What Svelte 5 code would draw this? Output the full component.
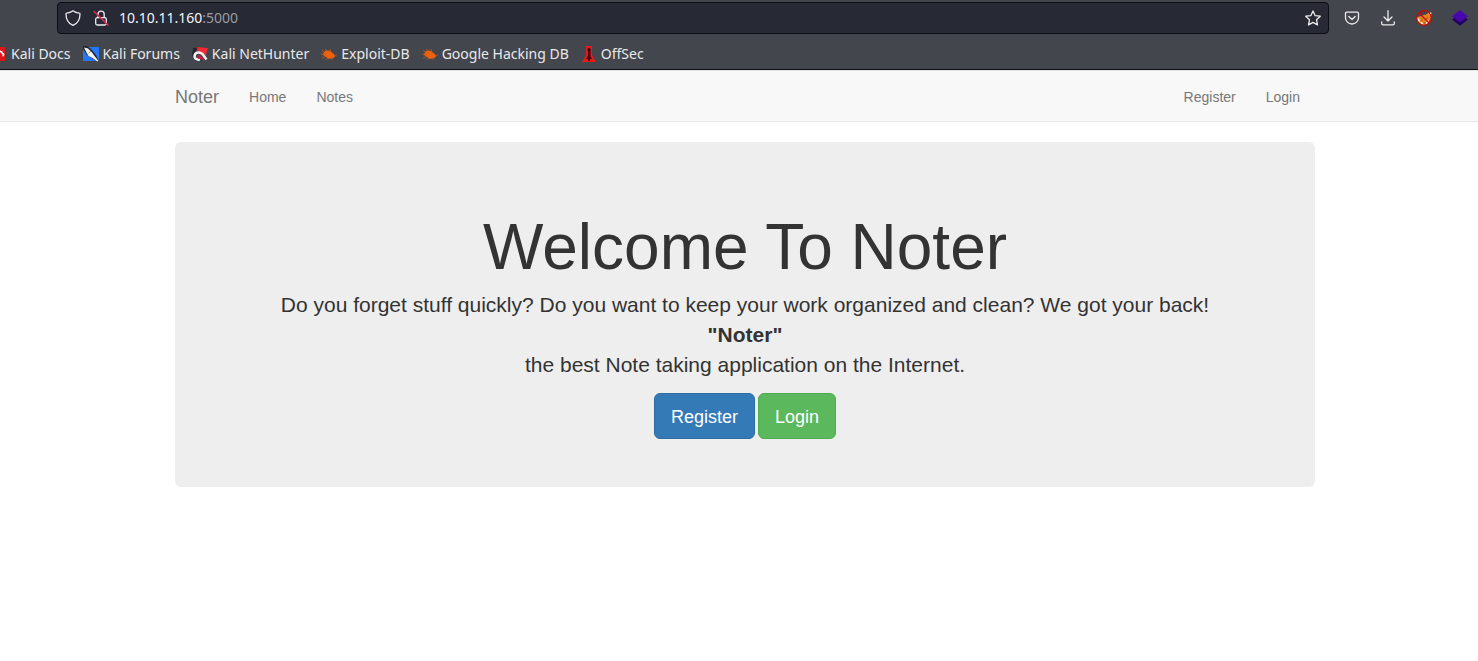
<script>
  const bookmarks = [
    { label: 'Kali Docs', icon: 'docs' },
    { label: 'Kali Forums', icon: 'forums' },
    { label: 'Kali NetHunter', icon: 'nethunter' },
    { label: 'Exploit-DB', icon: 'bug' },
    { label: 'Google Hacking DB', icon: 'bug' },
    { label: 'OffSec', icon: 'offsec' }
  ];
</script>

<div class="browser">
  <div class="toolbar">
    <div class="address">
      <button class="tool shield" aria-label="Tracking protection">
        <svg viewBox="0 0 16 16"><path d="M8 .8C6.2 2.2 4 3 1.7 3.2c-.5 0-.7.4-.7.8 0 5 1.700 9.200 7 11.400 5.300-2.200 7-6.400 7-11.400 0-.4-.2-.8-.7-.8C12 3 9.800 2.200 8 .8z" /></svg>
      </button>
      <button class="tool lock" aria-label="Connection is not secure">
        <svg viewBox="0 0 16 16"><rect x="2.700" y="7.700" width="10.600" height="7.300" rx="1.500" /><path d="M5 7.500V4.300a3.100 3.100 0 0 1 6.200 0v3.200" /><path class="slash" d="M1 1.500 15 15" /></svg>
      </button>
      <div class="url"><span>10.10.11.160</span>:5000</div>
      <button class="tool" aria-label="Bookmark this page">
        <svg viewBox="0 0 16 16"><path d="m8 .9 2.100 4.700 5.200.6-3.800 3.500 1 5.200L8 12.400l-4.500 2.500 1-5.200L.7 6.200l5.200-.6z" /></svg>
      </button>
    </div>
    <div class="actions">
      <button class="tool" aria-label="Save to Pocket">
        <svg viewBox="0 0 16 16"><path d="M2.800 2.200h10.400c.8 0 1.300.5 1.300 1.300v4.200a6.500 6.300 0 0 1-13 0V3.500c0-.8.5-1.300 1.300-1.300z" /><path d="M4.800 6.500 8 9.500l3.200-3" /></svg>
      </button>
      <button class="tool" aria-label="Downloads">
        <svg viewBox="0 0 16 16"><path d="M8 .7v10.200M4 7l4 4 4-4M1.700 11.800v1.700c0 .8.500 1.300 1.300 1.300h10c.8 0 1.300-.5 1.300-1.300v-1.700" /></svg>
      </button>
      <button class="tool art" aria-label="FoxyProxy">
        <svg viewBox="0 0 16 16"><path fill="#e7831b" d="m1 7 2.500-.5L6 5.500l4-1 3-2 2.500.5-.5 5-2 4-3 2.500-3 .5-4-2-2-3z" /><path fill="#f1e9e2" d="M.7 7 3.500 9 4 12.500l-2-1.500zM12.300 3.500l3-1.200-.5 4zM4 12l2.500.3.800 2.200-2-.3zM10 12l3-2-.5 2.500-2.500 2z" /><path fill="#7c3912" d="m5 9.500 2 .3-1 1zM10 8l2-.5-1 1.500zM7.500 12.500h2l-1 1.200z" /><circle cx="8" cy="8" r="7.300" fill="none" stroke="#cb0909" /><path d="m3 3 10 10" fill="none" stroke="#cb0909" /></svg>
      </button>
      <button class="tool art" aria-label="Wappalyzer">
        <svg viewBox="0 0 16 16"><path fill="#200061" d="M0 9.500 8 4l8 5.500-8 6.300z" /><path fill="#4608ad" d="M0 6.300 8 0l8 6.300-8 6z" /></svg>
      </button>
    </div>
  </div>

  <nav class="bookmarks" aria-label="Bookmarks">
    {#each bookmarks as item}
      <a href="#bookmark">
        <svg viewBox="0 0 16 16" aria-hidden="true">
          {#if item.icon === 'docs'}
            <path fill="#dc1717" d="M0 1h14v14H0z" /><path fill="none" stroke="#fff" stroke-width="1.600" d="M8.500 5.500c2-.5 2.500.5 3 2 1.500 0 1.500 2 0 2.500" />
          {:else if item.icon === 'forums'}
            <path fill="#2477f5" d="M0 1h16v12l-2 2H0z" /><path fill="#25282d" d="M0 0h4l4 3 5 6 3 7-6-3-6-4-4-6z" /><path fill="#f3f4f5" d="m1 1.500 4 1 4 4 2.500 3.500 4 5-1 .5-5-3.500-4-2-2-3.500z" /><path fill="none" stroke="#6b7078" stroke-width=".8" d="m5.500 7 2-1.500" />
          {:else if item.icon === 'nethunter'}
            <path fill="#f52735" d="m4 1 12 1-3 9-6-3z" /><path fill="#24272d" d="m1 2 5-.5-3 4.500v7l8 2H3l-3-6z" /><path fill="none" stroke="#f2f2f3" stroke-width="2.500" d="M14.500 13.500 10.500 8C7 5 2.500 6.500 2.500 10.500c0 2.500 3 3.500 5.500 3" /><path fill="none" stroke="#da163c" stroke-width="1.300" d="M9 12.500c-4 0-4-3.500-1.500-2.500l4.500 4" />
          {:else if item.icon === 'bug'}
            <path fill="#f0610d" d="M3 6c2-2 5-2 7 0l3 2 1 3-2 1-4 1-3-2-3-2z" /><path fill="none" stroke="#d65b18" stroke-width=".7" d="m1 4 4 4M4 3l3 4M9 3l1 4M0 8l5 1M1 12l5-2M5 14l2-3M11 14v-3M16 9l-3 1" />
          {:else}
            <path fill="#e71919" d="M5 0h6v9l4 7H1l4-7z" /><path fill="#4b080c" d="M7 3h2.500v7l1.500 3H9v2H7v-2H5l2-3z" /><circle cx="8" cy="3.500" r="1.500" fill="#25070a" />
          {/if}
        </svg>{item.label}
      </a>
    {/each}
  </nav>
</div>

<div class="page">
  <nav class="navbar" aria-label="Main">
    <div class="container links">
      <a class="brand" href="#home">Noter</a>
      <a href="#home">Home</a>
      <a href="#notes">Notes</a>
      <a class="end" href="#register">Register</a>
      <a href="#login">Login</a>
    </div>
  </nav>
  <main class="container">
    <section class="hero">
      <h1>Welcome To Noter</h1>
      <p>
        Do you forget stuff quickly? Do you want to keep your work organized and clean? We got your back!<br />
        <strong>"Noter"</strong><br />
        the best Note taking application on the Internet.
      </p>
      <div class="buttons">
        <a class="primary" href="#register">Register</a>
        <a class="success" href="#login">Login</a>
      </div>
    </section>
  </main>
</div>

<style>
  :global(body) { margin: 0; background: #fff; overflow-x: hidden; }
  * { box-sizing: border-box; }
  a { text-decoration: none; }

  .browser {
    background: #43464d;
    border-bottom: 1px solid #0c0c14;
    font-family: "Noto Sans", sans-serif;
    font-size: 14px;
    color: #e9e9ea;
    overflow: hidden;
  }
  .toolbar { display: flex; align-items: center; height: 36px; padding: 0 10px 0 57px; gap: 15px; }
  .address {
    flex: 1;
    display: flex;
    align-items: center;
    height: 32px;
    padding: 0 7px;
    background: #272935;
    border: 1px solid #0c0c14;
    border-radius: 4px;
  }
  .url { flex: 1; padding-left: 10px; color: #9a9ba0; line-height: 20px; }
  .url span { color: #f5f5f6; }
  .actions { display: flex; gap: 20px; }
  .tool { display: block; width: 16px; height: 16px; padding: 0; border: 0; background: none; }
  .tool svg {
    display: block;
    width: 16px;
    height: 16px;
    fill: none;
    stroke: #ececee;
    stroke-width: 1.3;
    stroke-linejoin: round;
    stroke-linecap: round;
  }
  .tool.art svg { stroke: none; }
  .lock { margin-left: 12px; }
  .lock .slash { stroke: #e22850; stroke-width: 1.5; }

  .bookmarks { display: flex; gap: 12px; height: 33px; padding-top: 3px; margin-left: -9px; white-space: nowrap; }
  .bookmarks a { display: flex; align-items: center; gap: 4px; color: inherit; line-height: 20px; }
  .bookmarks svg { width: 16px; height: 16px; flex: none; }

  .page {
    padding-left: 12px;
    font-family: "Liberation Sans", Arial, sans-serif;
    color: #333;
  }
  .container { max-width: 1170px; margin: 0 auto; padding: 0 15px; }
  .navbar {
    margin: 0 0 20px -12px;
    padding-left: 12px;
    background: #f8f8f8;
    border: solid #e7e7e7;
    border-width: 1px 0;
  }
  .links { display: flex; align-items: center; height: 50px; gap: 30px; padding-top: 2px; padding-right: 30px; }
  .links a { color: #777; font-size: 14px; line-height: 20px; }
  .links .brand { font-size: 18px; }
  .links .end { margin-left: auto; }

  .hero { padding: 71px 60px 48px; background: #eee; border-radius: 6px; text-align: center; }
  h1 { margin: 0 0 8px; font-size: 64px; font-weight: 400; line-height: 69px; }
  p { margin: 0 0 13px; font-size: 21px; line-height: 30px; }
  .buttons { display: flex; justify-content: center; gap: 3px; }
  .buttons a {
    padding: 11px 16px 9px;
    border: 1px solid;
    border-radius: 6px;
    color: #fff;
    font-size: 18px;
    line-height: 24px;
  }
  .buttons .primary { background: #337ab7; border-color: #2e6da4; }
  .buttons .success { background: #5cb85c; border-color: #4cae4c; }
</style>
